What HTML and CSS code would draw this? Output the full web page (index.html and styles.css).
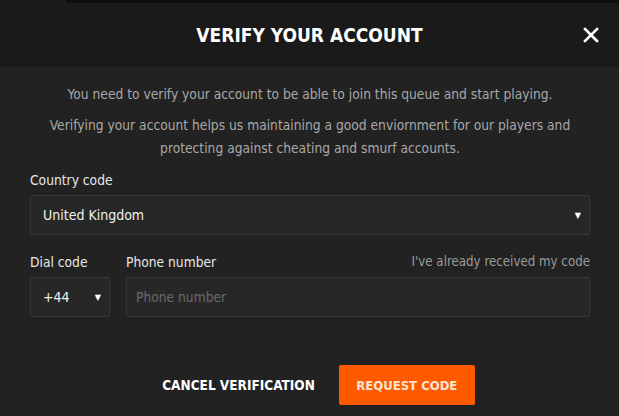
FILE: index.html
```html
<!DOCTYPE html>
<html lang="en">
<head>
<meta charset="utf-8">
<title>Verify your account</title>
<link rel="stylesheet" href="styles.css">
</head>
<body>
<div class="backdrop-strip"></div>
<div class="modal">
  <header class="modal-header">
    <h1 class="modal-title">VERIFY YOUR ACCOUNT</h1>
    <button class="close-btn" aria-label="Close">
      <svg width="16" height="16" viewBox="0 0 16 16"><path d="M2 2 L14 14 M14 2 L2 14" stroke="#fff" stroke-width="2.6" stroke-linecap="square"/></svg>
    </button>
  </header>
  <div class="modal-body">
    <p class="intro">You need to verify your account to be able to join this queue and start playing.</p>
    <p class="intro">Verifying your account helps us maintaining a good enviornment for our players and protecting against cheating and smurf accounts.</p>

    <div class="field">
      <div class="label">Country code</div>
      <div class="select select-wide">
        <span class="value">United Kingdom</span>
        <span class="caret">&#9660;</span>
      </div>
    </div>

    <div class="row">
      <div class="field dial">
        <div class="label">Dial code</div>
        <div class="select">
          <span class="value">+44</span>
          <span class="caret">&#9660;</span>
        </div>
      </div>
      <div class="field phone">
        <div class="label-row">
          <span class="label">Phone number</span>
          <span class="link">I've already received my code</span>
        </div>
        <div class="input"><span class="placeholder">Phone number</span></div>
      </div>
    </div>

    <div class="actions">
      <button class="btn-cancel">CANCEL VERIFICATION</button>
      <button class="btn-primary">REQUEST CODE</button>
    </div>
  </div>
</div>
</body>
</html>
```
FILE: styles.css
```css
* { box-sizing: border-box; }
html, body {
  margin: 0;
  padding: 0;
  background: #222222;
  height: 100%;
}
body {
  font-family: "Liberation Sans Narrow", "DejaVu Sans Condensed", "Liberation Sans", sans-serif;
  color: #e0e0e0;
  position: relative;
  overflow: hidden;
}
.backdrop-strip {
  position: absolute;
  top: 0;
  left: 66px;
  right: 0;
  height: 3px;
  background: #0e0e0e;
  z-index: 2;
}
.modal {
  width: 619px;
  height: 416px;
  display: flex;
  flex-direction: column;
}
.modal-header {
  height: 67px;
  background: #1a1a1a;
  display: flex;
  align-items: center;
  justify-content: center;
  position: relative;
}
.modal-title {
  margin: 3px 0 0 0;
  font-family: "DejaVu Sans Condensed", "Liberation Sans", sans-serif;
  font-weight: bold;
  font-size: 19px;
  color: #ffffff;
  letter-spacing: 0;
}
.close-btn {
  position: absolute;
  right: 20px;
  top: 27px;
  width: 16px;
  height: 16px;
  padding: 0;
  border: 0;
  background: none;
  display: flex;
}
.modal-body {
  flex: 1;
  background: #222222;
  padding: 16px 29px 0 30px;
  display: flex;
  flex-direction: column;
}
.intro {
  margin: 0 0 8px 0;
  text-align: center;
  font-size: 13.7px;
  line-height: 23px;
  color: #a8a8a8;
  padding: 0 10px;
}
.field { display: flex; flex-direction: column; }
.label {
  font-size: 13.7px;
  line-height: 18px;
  color: #e6e6e6;
}
.field > .label { margin: 3px 0 6px 0; }
.select, .input {
  height: 40px;
  background: #272727;
  border: 1px solid #363636;
  border-radius: 2px;
  display: flex;
  align-items: center;
  justify-content: space-between;
  padding: 0 8px 0 12px;
}
.value {
  font-size: 14px;
  color: #f0f0f0;
}
.caret {
  font-size: 8px;
  color: #ffffff;
  font-family: "DejaVu Sans", sans-serif;
}
.row {
  display: flex;
  gap: 16px;
  margin-top: 18px;
}
.dial { width: 80px; }
.dial .select { padding: 0 8px 0 12px; }
.dial > .label { margin: 0 0 6px 0; }
.phone { flex: 1; }
.label-row {
  display: flex;
  justify-content: space-between;
  align-items: center;
  margin-bottom: 6px;
}
.link {
  font-size: 13.2px;
  line-height: 18px;
  color: #9a9a9a;
}
.input { padding-left: 9px; }
.placeholder {
  font-size: 13.7px;
  color: #6a6a6a;
}
.actions {
  display: flex;
  justify-content: center;
  align-items: center;
  gap: 24px;
  margin-top: 48px;
  padding-left: 17px;
}
.btn-cancel {
  background: none;
  border: 0;
  padding: 0;
  font-family: "DejaVu Sans Condensed", "Liberation Sans", sans-serif;
  font-weight: bold;
  font-size: 13.5px;
  color: #ffffff;
}
.btn-primary {
  height: 40px;
  width: 136px;
  background: #ff5a00;
  border: 0;
  border-radius: 2px;
  font-family: "DejaVu Sans Condensed", "Liberation Sans", sans-serif;
  font-weight: bold;
  font-size: 13px;
  color: #fbe3d2;
}
```
